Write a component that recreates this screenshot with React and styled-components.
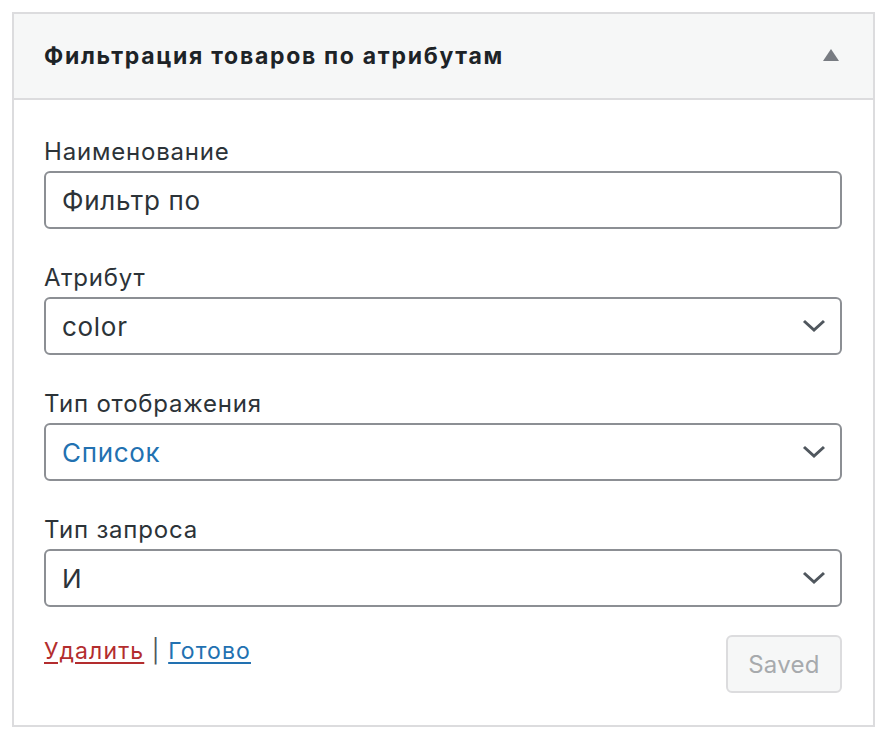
import React from 'react';
import styled, { createGlobalStyle } from 'styled-components';

const GlobalStyle = createGlobalStyle`
  body {
    margin: 0;
    background: #ffffff;
    font-family: Inter, "Noto Sans", sans-serif;
    color: #2c3338;
  }
`;

const Panel = styled.div`
  margin: 12px 0 0 12px;
  width: 863px;
  box-sizing: border-box;
  border: 2px solid #dcdcde;
  background: #fff;
`;

const Header = styled.div`
  display: flex;
  align-items: center;
  justify-content: space-between;
  height: 84px;
  padding: 0 34px 0 30px;
  background: #f6f7f7;
  border-bottom: 2px solid #dcdcde;
`;

const Title = styled.h3`
  margin: 0;
  font-size: 23px;
  font-weight: 700;
  letter-spacing: 1.7px;
  color: #1d2327;
`;

const Toggle = styled.span`
  width: 0;
  height: 0;
  margin-top: -2px;
  border-left: 8px solid transparent;
  border-right: 8px solid transparent;
  border-bottom: 12px solid #787c82;
`;

const Body = styled.div`
  padding: 37px 31px 32px 30px;
`;

const Field = styled.div`
  & + & {
    margin-top: 34px;
  }
`;

const Label = styled.label`
  display: block;
  font-size: 24px;
  line-height: 30px;
  letter-spacing: 0.8px;
  margin-bottom: 4px;
  color: #2c3338;
`;

const Box = styled.div`
  display: flex;
  align-items: center;
  justify-content: space-between;
  height: 58px;
  box-sizing: border-box;
  padding: 0 14px 0 16px;
  border: 2px solid #8c8f94;
  border-radius: 6px;
  font-size: 26px;
  letter-spacing: 0.7px;
  color: ${(p) => (p.$accent ? '#2271b1' : '#2c3338')};
`;

const Footer = styled.div`
  display: flex;
  justify-content: space-between;
  align-items: flex-start;
  margin-top: 28px;
`;

const Links = styled.div`
  font-size: 23px;
  line-height: 30px;
  letter-spacing: 1.1px;
  margin-top: 1px;
  color: #50575e;
`;

const Link = styled.a`
  color: ${(p) => (p.$danger ? '#b32d2e' : '#2271b1')};
  text-decoration: underline;
  text-decoration-thickness: 2px;
  text-underline-offset: 3px;
`;

const SavedButton = styled.button`
  width: 116px;
  height: 58px;
  border: 2px solid #dcdcde;
  border-radius: 6px;
  background: #f6f7f7;
  color: #a7aaad;
  font-family: inherit;
  font-size: 24px;
  letter-spacing: 0.3px;
`;

const Chevron = () => (
  <svg width="24" height="14" viewBox="0 0 24 14">
    <path d="M2 2 L12 11 L22 2" fill="none" stroke="#50575e" strokeWidth="3" />
  </svg>
);

const fields = [
  { label: 'Наименование', value: 'Фильтр по', select: false },
  { label: 'Атрибут', value: 'color', select: true },
  { label: 'Тип отображения', value: 'Список', select: true, accent: true },
  { label: 'Тип запроса', value: 'И', select: true },
];

export default function App() {
  return (
    <>
      <GlobalStyle />
      <Panel>
        <Header>
          <Title>Фильтрация товаров по атрибутам</Title>
          <Toggle />
        </Header>
        <Body>
          {fields.map((f) => (
            <Field key={f.label}>
              <Label>{f.label}</Label>
              <Box $accent={f.accent}>
                <span>{f.value}</span>
                {f.select && <Chevron />}
              </Box>
            </Field>
          ))}
          <Footer>
            <Links>
              <Link $danger href="#">Удалить</Link> | <Link href="#">Готово</Link>
            </Links>
            <SavedButton disabled>Saved</SavedButton>
          </Footer>
        </Body>
      </Panel>
    </>
  );
}
